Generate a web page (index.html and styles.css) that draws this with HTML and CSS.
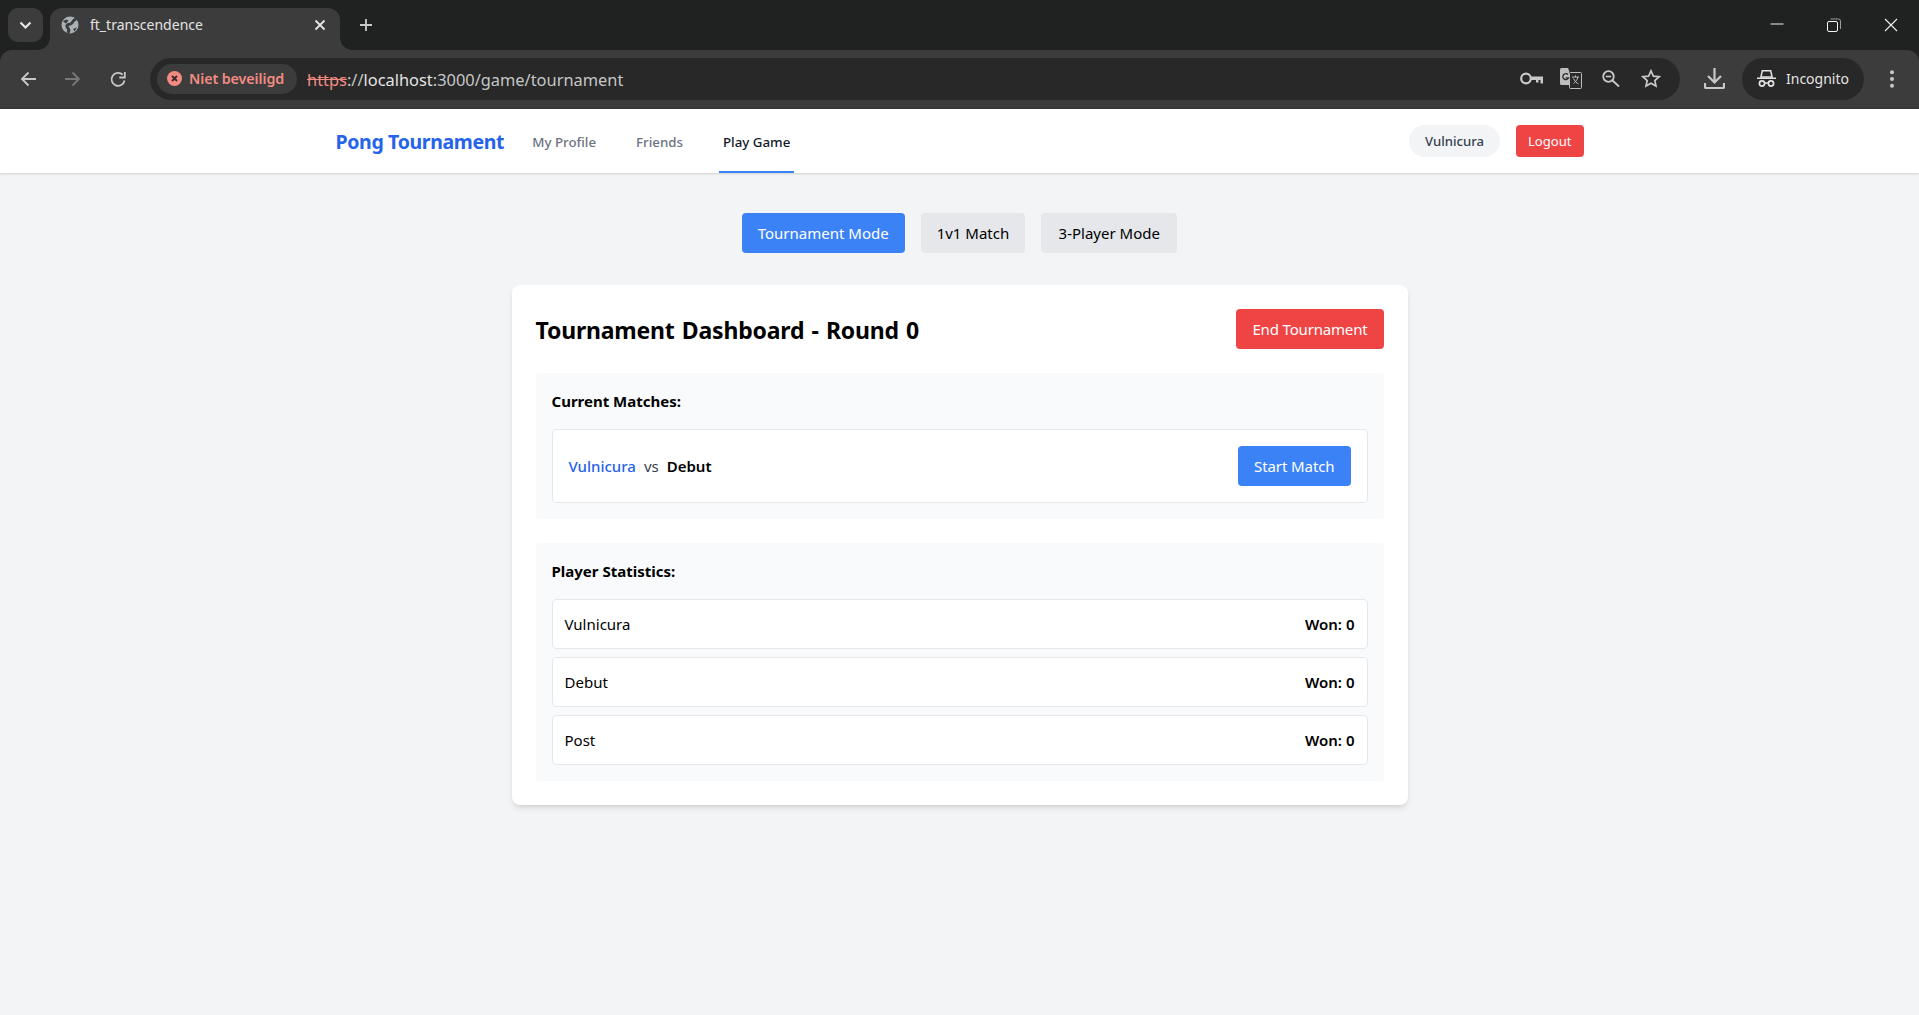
FILE: index.html
```html
<!DOCTYPE html>
<html lang="nl">
<head>
<meta charset="utf-8">
<title>ft_transcendence</title>
<link rel="stylesheet" href="styles.css">
</head>
<body>
<header class="browser">
  <div class="tabstrip">
    <button class="tab-search" aria-label="Tabs zoeken"><svg width="13" height="9" viewBox="0 0 13 9"><path d="M1.500 1.500l5 5 5-5" fill="none" stroke="#e6e6e6" stroke-width="2.200"/></svg></button>
    <div class="tab">
      <svg class="favicon" width="18" height="18" viewBox="0 0 18 18"><circle cx="9" cy="9" r="8.500" fill="#a9b0b6"/><path d="M15.500 3.500C11.500 2.500 12.500 7.500 9.500 8C6.500 8.300 5 9.500 6.500 11.500C8 13 8.500 14.500 7 17" fill="none" stroke="#3c3c3c" stroke-width="3"/><path d="M2 5.500C4 3.500 6 3.500 7.500 4.500L5 7.500z" fill="#3c3c3c"/><path d="M12 13l4-1.500-2.500 4z" fill="#3c3c3c"/></svg>
      <span class="tab-title">ft_transcendence</span>
      <svg class="tab-close" width="12" height="12" viewBox="0 0 12 12"><path d="M1.500 1.500l9 9M10.500 1.500l-9 9" stroke="#e6e6e6" stroke-width="1.800"/></svg>
    </div>
    <svg class="new-tab" width="14" height="14" viewBox="0 0 14 14"><path d="M7 1v12M1 7h12" stroke="#c9c9c9" stroke-width="1.800"/></svg>
    <div class="window-controls">
      <svg width="14" height="14" viewBox="0 0 14 14"><path d="M0.500 6h13" stroke="#f0f0f0"/></svg>
      <svg width="14" height="14" viewBox="0 0 14 14"><rect x="0.500" y="3.500" width="10" height="10" rx="1.500" fill="none" stroke="#f5f5f5"/><path d="M3.500 1h8a2 2 0 0 1 2 2v8" fill="none" stroke="#9c9c9c"/></svg>
      <svg width="14" height="14" viewBox="0 0 14 14"><path d="M1 1l12 12M13 1l-12 12" stroke="#f0f0f0" stroke-width="1.100"/></svg>
    </div>
  </div>
  <div class="toolbar">
    <svg class="tool" width="18" height="18" viewBox="0 0 18 18"><path d="M17 9H3M9.500 2.500L3 9l6.500 6.500" fill="none" stroke="#c8c8c8" stroke-width="1.800"/></svg>
    <svg class="tool" width="18" height="18" viewBox="0 0 18 18"><path d="M1 9h14M8.500 2.500L15 9l-6.500 6.500" fill="none" stroke="#777" stroke-width="1.800"/></svg>
    <svg class="tool" width="18" height="18" viewBox="0 0 18 18"><path d="M15.500 10.500a6.500 6.500 0 1 1-1.800-5.800" fill="none" stroke="#c8c8c8" stroke-width="1.800"/><path d="M15.800 2v5.500h-5.500" fill="none" stroke="#c8c8c8" stroke-width="1.800"/></svg>
    <div class="omnibox">
      <div class="security-chip">
        <svg width="15" height="15" viewBox="0 0 15 15"><circle cx="7.500" cy="7.500" r="7.500" fill="#f28b82"/><path d="M5 5l5 5M10 5l-5 5" stroke="#3c2a29" stroke-width="1.800"/></svg>
        <span>Niet beveiligd</span>
      </div>
      <div class="url"><s class="scheme">https</s><span class="url-dim">://</span><span>localhost</span><span class="url-dim">:3000/game/tournament</span></div>
      <div class="omni-actions">
        <svg class="key" width="23" height="13" viewBox="0 0 23 13"><circle cx="6" cy="6.500" r="4.800" fill="none" stroke="#c8c8c8" stroke-width="2.200"/><path d="M11 4.500h12v7h-2.500V8H18.500v2.500h-2.500V8H11z" fill="#c8c8c8"/></svg>
        <svg width="22" height="21" viewBox="0 0 22 21"><path d="M1.500 0H8l1.500 4H9l3 13H1.500A1.500 1.500 0 0 1 0 15.500V1.500A1.500 1.500 0 0 1 1.500 0z" fill="#bdbdbd"/><rect x="9.500" y="4.500" width="12" height="16" rx="1" fill="#2a2a2a" stroke="#bdbdbd"/><path d="M8 6.500a3 3 0 1 0 .6 3.300H5.700" fill="none" stroke="#2a2a2a" stroke-width="1.300"/><path d="M12 9h7M15.500 7.500V9M18 9c-.8 3-2.500 5-4.500 6.500M13.500 10.500c1 2.200 3 4.500 5 5.500" fill="none" stroke="#c8c8c8" stroke-width=".900"/></svg>
        <svg width="18" height="17" viewBox="0 0 18 17"><circle cx="6.500" cy="6.500" r="5.300" fill="none" stroke="#c8c8c8" stroke-width="1.800"/><path d="M10.500 10.500l6.500 6" stroke="#c8c8c8" stroke-width="1.900"/><path d="M3.800 6.500h5.400" stroke="#c8c8c8" stroke-width="1.600"/></svg>
        <svg class="star" width="20" height="19" viewBox="0 0 20 19"><path d="M10 1.800l2.400 5.300 5.700.6-4.300 3.800 1.200 5.600L10 14.300l-5 2.800 1.200-5.600-4.300-3.800 5.700-.6z" fill="none" stroke="#c8c8c8" stroke-width="1.700" stroke-linejoin="miter"/></svg>
      </div>
    </div>
    <svg class="download" width="21" height="21" viewBox="0 0 21 21"><path d="M10.500 0v14M4 8l6.500 6.500L17 8" fill="none" stroke="#c8c8c8" stroke-width="2.200"/><path d="M1 15v4a1 1 0 0 0 1 1h17a1 1 0 0 0 1-1v-4" fill="none" stroke="#c8c8c8" stroke-width="2.200"/></svg>
    <div class="incognito">
      <svg width="19" height="17" viewBox="0 0 19 17"><path d="M5.300.8h8.400l1.400 6.200H3.900z" fill="none" stroke="#e3e3e3" stroke-width="1.500"/><path d="M0 7.500h19v1.500H0z" fill="#e3e3e3"/><circle cx="5" cy="13.500" r="2.600" fill="none" stroke="#e3e3e3" stroke-width="1.700"/><circle cx="14" cy="13.500" r="2.600" fill="none" stroke="#e3e3e3" stroke-width="1.700"/><path d="M7.500 13h4" stroke="#e3e3e3" stroke-width="1.500"/></svg>
      <span>Incognito</span>
    </div>
    <svg class="menu" width="6" height="18" viewBox="0 0 6 18"><circle cx="3" cy="2.300" r="2" fill="#c8c8c8"/><circle cx="3" cy="9" r="2" fill="#c8c8c8"/><circle cx="3" cy="15.700" r="2" fill="#c8c8c8"/></svg>
  </div>
</header>

<nav class="navbar">
  <div class="nav-inner">
    <div class="nav-left">
      <a class="logo">Pong Tournament</a>
      <a class="nav-link">My Profile</a>
      <a class="nav-link">Friends</a>
      <a class="nav-link active">Play Game</a>
    </div>
    <div class="nav-right">
      <span class="user-chip">Vulnicura</span>
      <button class="logout">Logout</button>
    </div>
  </div>
</nav>

<main class="page">
  <div class="mode-tabs">
    <button class="btn btn-blue">Tournament Mode</button>
    <button class="btn btn-gray">1v1 Match</button>
    <button class="btn btn-gray btn-wide">3-Player Mode</button>
  </div>
  <section class="card">
    <div class="card-head">
      <h1>Tournament Dashboard - Round 0</h1>
      <button class="btn btn-red">End Tournament</button>
    </div>
    <div class="panel">
      <h2>Current Matches:</h2>
      <div class="match-row">
        <div class="match-names"><span class="p1">Vulnicura</span><span class="vs">vs</span><span class="p2">Debut</span></div>
        <button class="btn btn-blue btn-start">Start Match</button>
      </div>
    </div>
    <div class="panel">
      <h2>Player Statistics:</h2>
      <div class="stat-list">
        <div class="stat-row"><span>Vulnicura</span><strong>Won: 0</strong></div>
        <div class="stat-row"><span>Debut</span><strong>Won: 0</strong></div>
        <div class="stat-row"><span>Post</span><strong>Won: 0</strong></div>
      </div>
    </div>
  </section>
</main>
</body>
</html>
```
FILE: styles.css
```css
* { box-sizing: border-box; }
html, body { margin: 0; height: 100%; }
body {
  background: #f3f4f6;
  font-family: "Noto Sans", "Open Sans", "Liberation Sans", sans-serif;
  font-size: 15px;
  line-height: 24px;
  color: #000;
  overflow: hidden;
}
button { font: inherit; border: 0; cursor: pointer; }
h1, h2 { margin: 0; }

/* Browser chrome */
.browser { height: 109px; background: #202221; }
.tabstrip { height: 50px; display: flex; align-items: center; padding-left: 8px; }
.tab-search { width: 35px; height: 34px; border-radius: 10px; background: #3c3c3c; display: flex; align-items: center; justify-content: center; padding: 0; }
.tab { position: relative; width: 290px; height: 42px; margin-left: 7px; margin-top: 8px; background: #3c3c3c; border-radius: 12px 12px 0 0; display: flex; align-items: center; padding: 0 14px 9px 11px; color: #e3e3e3; font-size: 14px; }
.tab::before, .tab::after { content: ""; position: absolute; bottom: 0; width: 12px; height: 12px; }
.tab::before { left: -12px; background: radial-gradient(circle at 0 0, transparent 11.500px, #3c3c3c 12px); }
.tab::after { right: -12px; background: radial-gradient(circle at 100% 0, transparent 11.500px, #3c3c3c 12px); }
.favicon { margin-right: 11px; flex: none; }
.tab-title { flex: 1; }
.tab-close { flex: none; }
.new-tab { margin-left: 19px; }
.window-controls { margin-left: auto; display: flex; gap: 43px; padding-right: 21px; }
.toolbar { height: 59px; background: #3c3c3c; border-bottom: 2px solid #383838; border-radius: 12px 12px 0 0; display: flex; align-items: center; padding: 0 10px 0 19px; }
.tool { margin-right: 27px; flex: none; }
.tool:nth-child(3) { margin-right: 23px; }
.omnibox { width: 1530px; height: 42px; flex: none; background: #282828; border-radius: 21px; display: flex; align-items: center; padding: 0 19px 0 7px; }
.security-chip { height: 30px; width: 140px; flex: none; background: #3c3c3c; border-radius: 15px; display: flex; align-items: center; gap: 7px; padding-left: 10px; color: #f28b82; font-size: 14.300px; font-weight: 600; letter-spacing: -.1px; }
.url { margin-left: 10px; padding-top: 2px; flex: 1; color: #e3e3e3; font-size: 16.400px; white-space: nowrap; }
.scheme { color: #f28b82; }
.url-dim { color: #c4c7c5; }
.omni-actions { display: flex; align-items: center; gap: 20px; }
.key { margin-right: -3px; }
.star { margin-left: 1px; }
.download { margin-left: 24px; flex: none; }
.incognito { margin-left: 17px; width: 122px; height: 42px; flex: none; background: #282828; border-radius: 21px; display: flex; align-items: center; gap: 10px; padding-left: 15px; color: #e3e3e3; font-size: 14px; }
.menu { margin-left: 25px; flex: none; }

/* App nav */
.navbar { height: 64px; background: #fff; box-shadow: 0 1px 2px rgba(0,0,0,.15); }
.nav-inner { max-width: 1280px; height: 100%; margin: 0 auto; padding: 0 16px; display: flex; justify-content: space-between; }
.nav-left { display: flex; align-items: stretch; }
.logo { align-self: center; padding-top: 2px; font-size: 19.500px; font-weight: 700; color: #2563eb; margin-right: 24px; letter-spacing: -.35px; }
.nav-link { display: flex; align-items: center; padding: 3px 4px 0; margin-right: 32px; font-size: 13.300px; font-weight: 500; color: #6b7280; border-bottom: 2px solid transparent; }
.nav-link.active { color: #111827; border-bottom-color: #3b82f6; }
.nav-right { display: flex; align-items: center; gap: 16px; }
.user-chip { height: 32px; display: flex; align-items: center; padding: 0 16px; background: #f3f4f6; border-radius: 16px; color: #374151; font-size: 13.100px; font-weight: 500; }
.logout { height: 32px; padding: 0 12px; border-radius: 4px; background: #ef4444; color: #fff; font-size: 13.100px; font-weight: 400; }

/* Page */
.page { display: flex; flex-direction: column; align-items: center; padding-top: 40px; }
.mode-tabs { display: flex; gap: 16px; margin-bottom: 32px; }
.btn { height: 40px; padding: 0 16px; border-radius: 4px; white-space: nowrap; }
.btn-blue { background: #3b82f6; color: #fff; }
.btn-gray { background: #e5e7eb; color: #000; }
.btn-red { background: #ef4444; color: #fff; letter-spacing: -.17px; }
.btn-wide { min-width: 136px; }
.btn-start { letter-spacing: -.1px; }
.card { width: 896px; padding: 24px; background: #fff; border-radius: 8px; box-shadow: 0 4px 6px -1px rgba(0,0,0,.1), 0 2px 4px -2px rgba(0,0,0,.1); display: flex; flex-direction: column; gap: 24px; }
.card-head { display: flex; justify-content: space-between; align-items: center; }
.card-head h1 { padding-top: 2px; font-size: 23px; line-height: 32px; font-weight: 700; letter-spacing: -.2px; word-spacing: 1.500px; }
.panel { padding: 16px; background: #f9fafb; border-radius: 4px; }
.panel h2 { font-size: 15px; line-height: 24px; font-weight: 700; margin-bottom: 16px; }
.match-row { display: flex; justify-content: space-between; align-items: center; padding: 16px; background: #fff; border: 1px solid #e5e7eb; border-radius: 4px; }
.match-names { display: flex; gap: 8px; }
.p1 { color: #2563eb; font-weight: 500; }
.vs { color: #374151; }
.p2 { font-weight: 600; }
.stat-list { display: flex; flex-direction: column; gap: 8px; }
.stat-row { display: flex; justify-content: space-between; padding: 12px; background: #fff; border: 1px solid #e5e7eb; border-radius: 4px; }
.stat-row strong { font-weight: 600; }
```
